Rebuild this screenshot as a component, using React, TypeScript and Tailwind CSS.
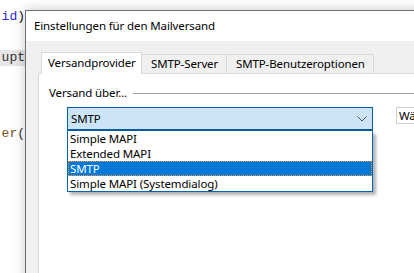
import React from "react";

const ui = { fontFamily: '"Noto Sans", "Open Sans", sans-serif' };
const mono = { fontFamily: '"Liberation Mono", "DejaVu Sans Mono", monospace' };

export default function App() {
  const items = ["Simple MAPI", "Extended MAPI", "SMTP", "Simple MAPI (Systemdialog)"];
  return (
    <div className="w-[414px] h-[273px] overflow-hidden bg-white flex text-black tracking-[-0.12px]" style={ui}>
      {/* background code editor */}
      <div className="w-[25px] shrink-0 flex flex-col pt-[9px] text-[13px] tracking-normal" style={mono}>
        <div className="h-[16px] leading-[16px] flex justify-end whitespace-nowrap">
          <span className="text-[#2b2bd9]">id</span>
          <span className="text-[#222]">)</span>
        </div>
        <div className="mt-[25px] h-[16px] leading-[16px] flex justify-end whitespace-nowrap bg-[#e6e6e6] text-[#333]">
          upt
        </div>
        <div className="mt-[60px] h-[16px] leading-[16px] flex justify-end whitespace-nowrap">
          <span className="text-[#74531f]">er</span>
          <span className="text-[#333]">(</span>
        </div>
      </div>

      {/* dialog */}
      <div className="relative mt-[10px] w-[420px] h-[280px] shrink-0 flex flex-col border-l border-t border-[#707070] shadow-[0_0_12px_rgba(0,0,0,0.22)]">
        <div className="h-[30px] bg-white flex items-center pl-[8px] text-[11.5px]">
          Einstellungen für den Mailversand
        </div>
        <div className="flex-1 bg-[#f0f0f0] pl-[12px] pt-[11px] flex flex-col">
          {/* tabs */}
          <div className="flex items-end h-[22px] -mb-px pl-[3px] text-[11.5px]">
            <div className="relative z-10 w-[101px] h-[22px] bg-white border border-b-0 border-[#d9d9d9] pl-[6px] pt-[3px] leading-[14px] whitespace-nowrap">
              Versandprovider
            </div>
            <div className="w-[85px] h-[19px] mb-px bg-[#f0f0f0] border border-b-0 border-l-0 border-[#d9d9d9] pl-[9px] pt-[1px] leading-[15px] whitespace-nowrap">
              SMTP-Server
            </div>
            <div className="w-[147px] h-[19px] mb-px bg-[#f0f0f0] border border-b-0 border-l-0 border-[#d9d9d9] pl-[9px] pt-[1px] leading-[15px] whitespace-nowrap">
              SMTP-Benutzeroptionen
            </div>
          </div>
          {/* panel */}
          <div className="flex-1 bg-white border border-[#d9d9d9] pl-[10px] pt-[11px] flex flex-col">
            <div className="flex items-center gap-[6px] h-[16px] text-[11.5px]">
              <span className="whitespace-nowrap">Versand über...</span>
              <div className="flex-1 h-px bg-[#a0a0a0]" />
            </div>
            <div className="flex items-start gap-[23px] mt-[6px] pl-[18px] text-[11.5px]">
              <div className="relative w-[306px] shrink-0">
                <div className="h-[24px] bg-[#cce4f7] border border-[#005a9e] border-b-2 flex items-center justify-between pl-[3px] pr-[5px]">
                  <span className="leading-[14px]">SMTP</span>
                  <svg width="10" height="6" viewBox="0 0 10 6" className="mt-[1px]">
                    <path d="M0.5 0.5 L5 5 L9.5 0.5" fill="none" stroke="#505050" strokeWidth="1" />
                  </svg>
                </div>
                <div className="absolute left-0 top-full w-[306px] bg-white border border-[#0063b1] border-t-0 shadow-[3px_3px_3px_rgba(0,0,0,0.3)] z-20">
                  {items.map((it) => (
                    <div
                      key={it}
                      className={
                        it === "SMTP"
                          ? "h-[15px] leading-[13px] bg-[#0078d7] text-white border border-dotted border-[#ff9a3c] pl-[1px] whitespace-nowrap"
                          : "h-[15px] leading-[15px] pl-[2px] whitespace-nowrap"
                      }
                    >
                      {it}
                    </div>
                  ))}
                </div>
              </div>
              <div className="h-[17px] w-[40px] border border-[#d0d0d0] bg-white pl-[2px] leading-[15px] whitespace-nowrap overflow-hidden">
                Wä
              </div>
            </div>
          </div>
        </div>
      </div>
    </div>
  );
}
